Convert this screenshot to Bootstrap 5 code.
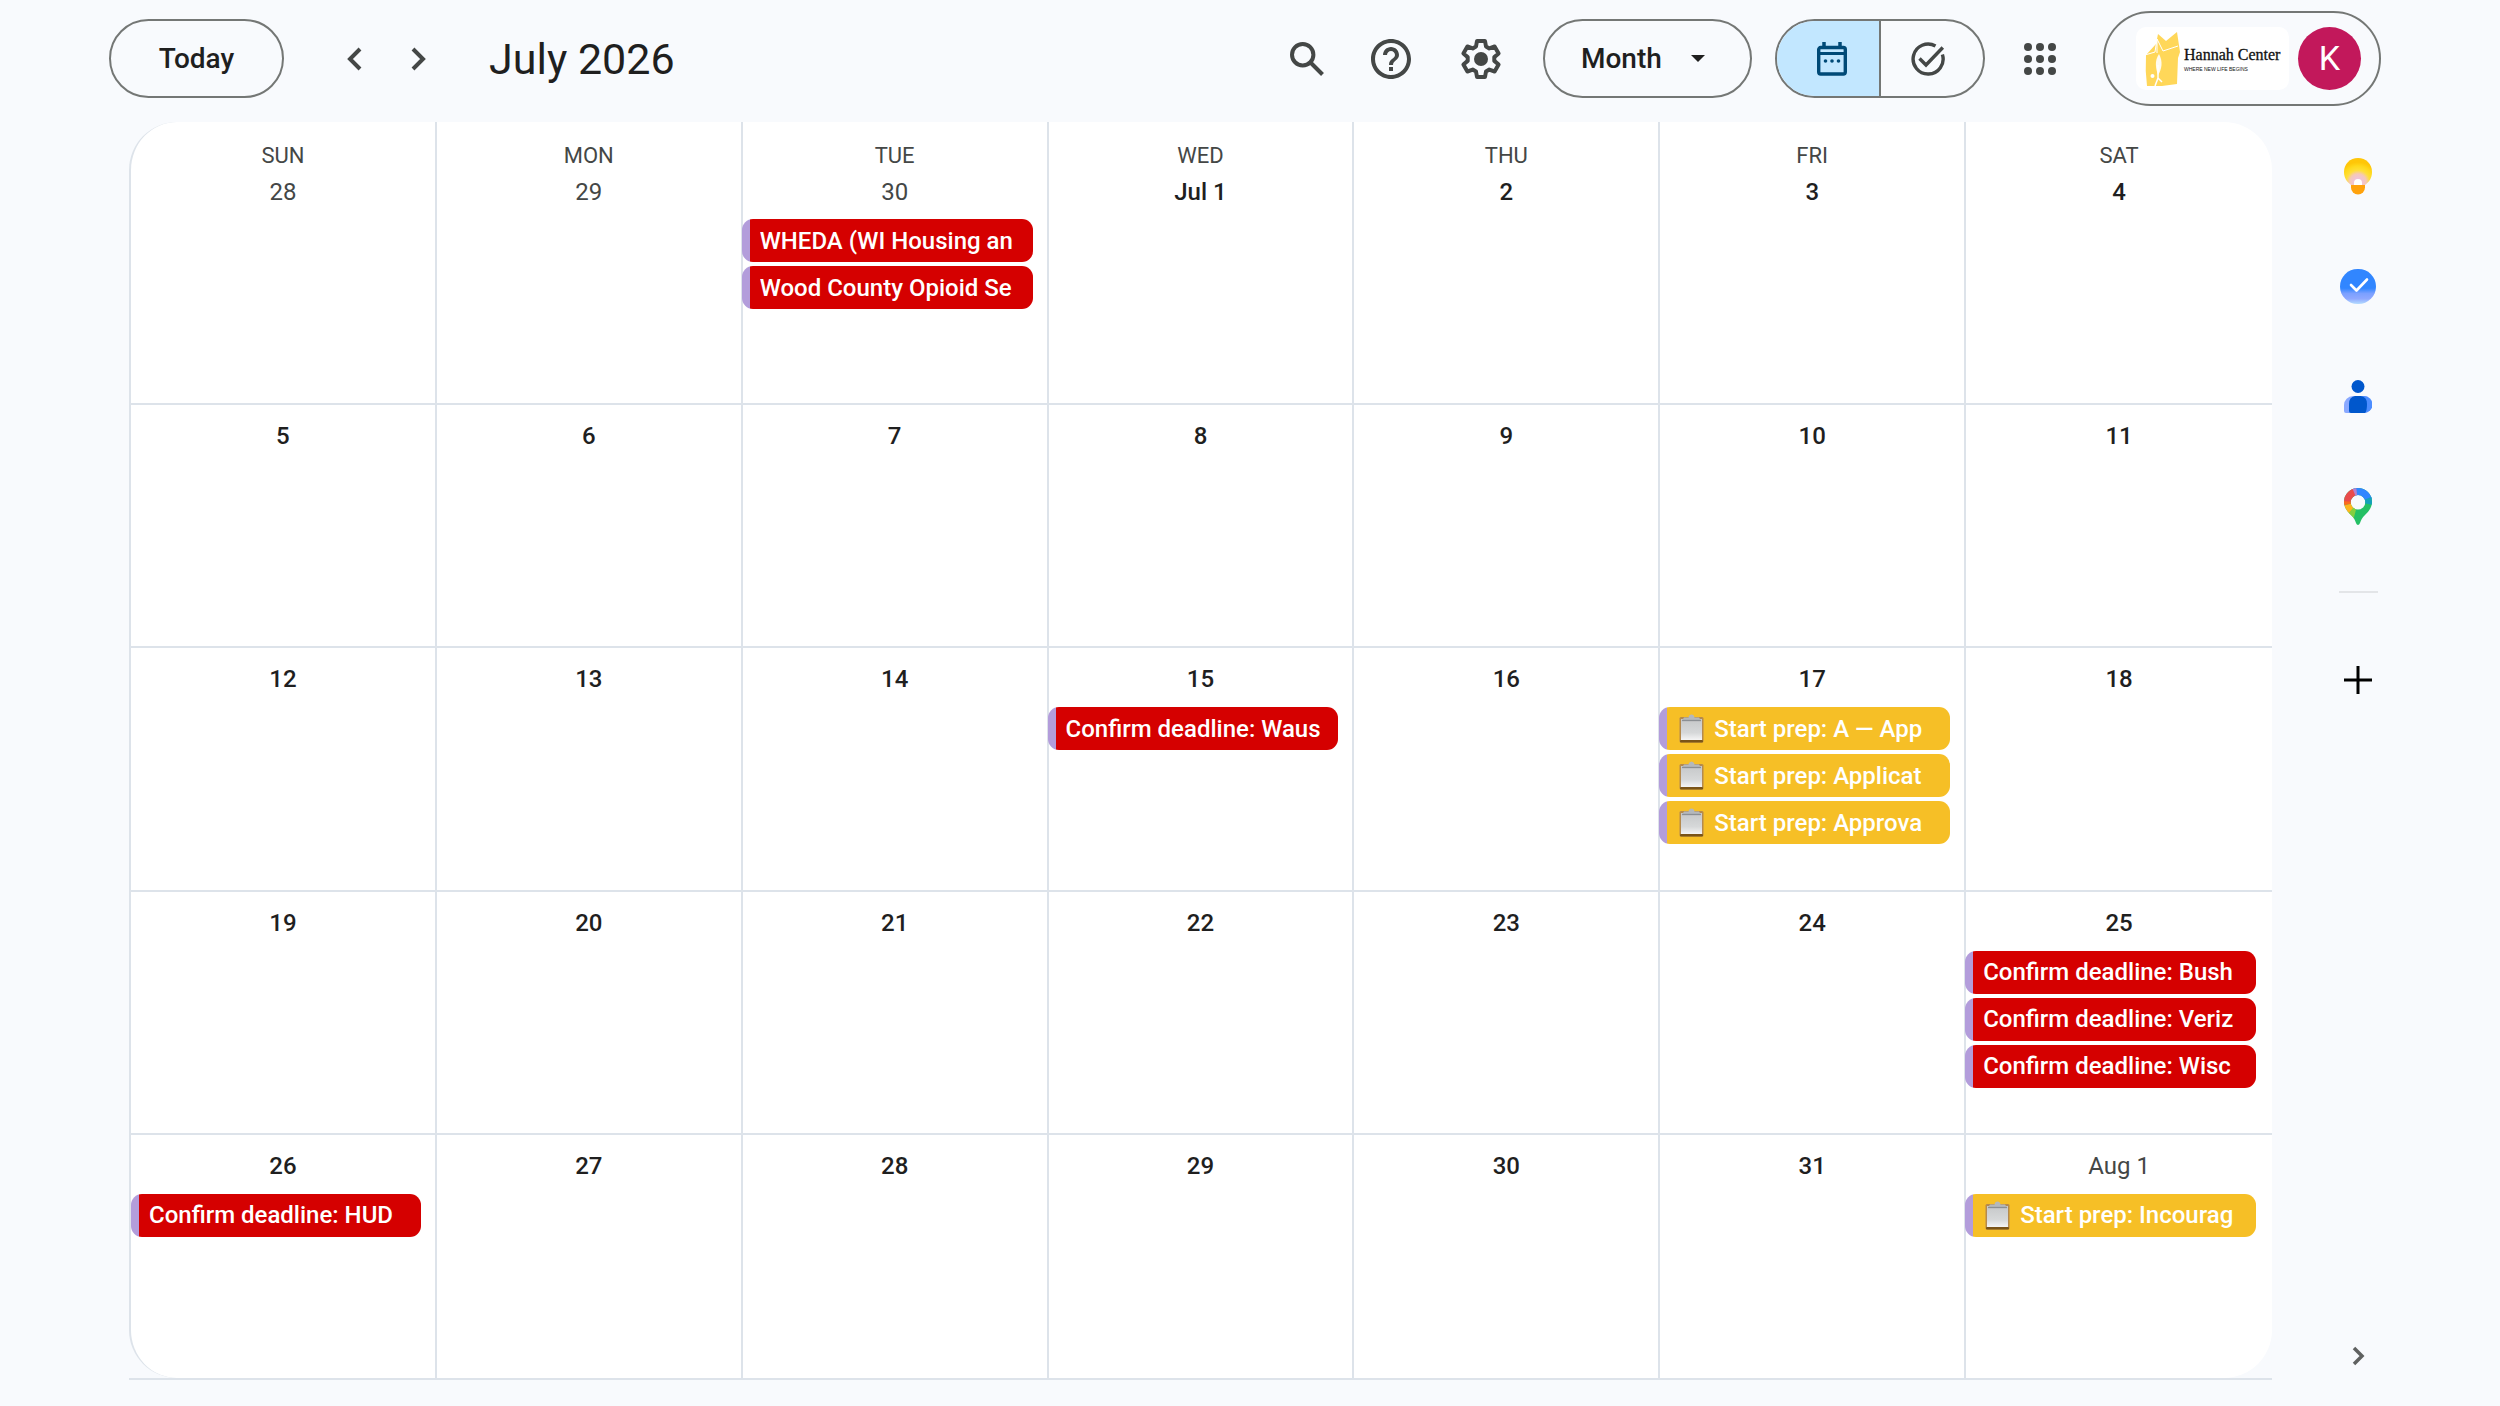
<!DOCTYPE html>
<html lang="en">
<head>
<meta charset="utf-8">
<meta name="viewport" content="width=device-width, initial-scale=1">
<title>Calendar - July 2026</title>
<link href="https://cdn.jsdelivr.net/npm/bootstrap@5.3.0/dist/css/bootstrap.min.css" rel="stylesheet">
<style>
  :root { --line: #dde3ea; --ink: #1f1f1f; --muted: #444746; --outline: #747775; }
  body { background: #f8fafd; color: var(--ink); font-family: Roboto, "Liberation Sans", sans-serif; font-weight: 500; }
  button { color: var(--muted); }
  svg { display: block; flex: none; }

  .topbar { height: 117px; padding: 0 119px 0 109px; margin-bottom: 5px; }
  .pill { height: 79px; border: 2px solid var(--outline); border-radius: 40px; background: transparent; color: var(--ink); font-size: 28px; font-weight: 500; }
  .pill-today { width: 175px; margin-right: 38px; }
  .tool { width: 64px; height: 64px; padding: 0; border: 0; background: transparent; display: flex; align-items: center; justify-content: center; }
  .month-title { font-size: 43px; font-weight: 400; line-height: 56px; margin: 0 0 0 39px; }
  .tool-group { gap: 22px; margin-right: 30px; }
  .tool-group .tool:first-child svg { margin-left: 4px; }

  .view-picker { margin-right: 23px; }
  .view-picker > * { grid-area: 1 / 1; }
  .view-picker select { width: 209px; padding: 0 36px; appearance: none; }
  .view-picker svg { justify-self: end; align-self: center; margin-right: 47px; pointer-events: none; }

  .mode { width: 210px; padding: 0; overflow: hidden; margin-right: 23px; }
  .mode button { flex: 1; border: 0; padding: 0 8px 0 0; background: transparent; display: flex; align-items: center; justify-content: center; }
  .mode button.is-on { padding: 0 0 0 8px; background: #c2e7ff; color: #004a77; border-right: 2px solid var(--outline); }

  .account { height: 95px; width: 278px; padding: 0 18px 0 31px; border-radius: 48px; margin-left: 31px; }
  .org { width: 153px; height: 63px; border-radius: 10px; background: #fff; padding-left: 9px; gap: 4px; color: #111; }
  .org-name { font: 400 16px/20px "Liberation Serif", serif; white-space: nowrap; -webkit-text-stroke: 0.3px currentColor; }
  .org-tag { font: 400 5px/8px "Liberation Sans Narrow", "Liberation Sans", sans-serif; white-space: nowrap; text-align: left; }
  .avatar { width: 63px; height: 63px; border-radius: 50%; background: #c2185b; color: #fff; font-size: 34px; font-weight: 400; }

  .stage { flex: 1; padding-bottom: 26px; }
  .board { flex: 1; margin-left: 129px; border-bottom: 2px solid var(--line); min-width: 0; }
  .board-inner { flex: 1; background: #fff; border-left: 2px solid var(--line); border-radius: 48px; overflow: hidden; }
  .cal { flex: 1; display: grid; grid-template-columns: repeat(7, minmax(0, 1fr)); grid-template-rows: 45px 239fr repeat(4, 244fr); }
  .cal thead, .cal tbody, .cal tr { display: contents; }
  .cal th { padding: 23px 0 0; font-size: 22px; line-height: 22px; font-weight: 400; color: var(--muted); text-align: center; }
  .cal td { padding: 17px 0 0; border-bottom: 2px solid var(--line); min-width: 0; }
  .cal th:not(:last-child), .cal td:not(:last-child) { border-right: 2px solid var(--line); }
  .cal tbody tr:first-child td { padding-top: 11px; }
  .cal tbody tr:last-child td { border-bottom: 0; }
  .day { font-size: 24px; line-height: 28px; text-align: center; margin-bottom: 14px; }
  .cal tbody tr:first-child .day { margin-bottom: 13px; }
  .day.other { color: var(--muted); font-weight: 400; }

  .ev { display: flex; align-items: center; height: 43px; margin: 0 14px 4px -1px; padding: 0 15px 0 18px; border-radius: 11px; background: linear-gradient(90deg, #b39ddb 8px, #d50000 8px); color: #fff; font-size: 24px; line-height: 32px; text-decoration: none; }
  .ev:hover { color: #fff; }
  .ev-text { overflow: hidden; white-space: nowrap; }
  .ev.prep { background: linear-gradient(90deg, #b39ddb 8px, #f6bf26 8px); padding-left: 20px; }
  .ev.prep svg { margin-right: 10px; }
  td:first-child .ev { margin-left: 0; }
  td:last-child .ev { margin-right: 16px; }

  .rail { width: 228px; }
  .rail-col { width: 110px; margin: -1px 0 0 31px; }
  .rail-col .tool { width: 110px; height: 110px; }
  .rail-col hr { width: 39px; margin: 30px 0 0; border-top: 2px solid #e3e5e8; opacity: 1; }
  .rail-col .add { height: 174px; }
  .rail-col .fold { height: 48px; color: #5f6160; }
</style>
<script src="https://cdn.jsdelivr.net/npm/bootstrap@5.3.0/dist/js/bootstrap.bundle.min.js"></script>
</head>
<body>
<svg width="0" height="0" class="position-absolute" aria-hidden="true">
  <defs>
    <linearGradient id="paper" x1="0" y1="0" x2="0" y2="1"><stop offset="0" stop-color="#c6c8c9"/><stop offset=".65" stop-color="#d6d8d9"/><stop offset="1" stop-color="#f5f5f5"/></linearGradient>
    <linearGradient id="taskfill" x1="0" y1="0" x2="0" y2="1"><stop offset=".55" stop-color="#3186ff"/><stop offset=".7" stop-color="#7ba0ff"/><stop offset=".85" stop-color="#8fa8ff"/><stop offset="1" stop-color="#b4dcff"/></linearGradient>
    <radialGradient id="bulb" cx=".5" cy=".88" r=".85"><stop offset=".12" stop-color="#f0c3dc"/><stop offset=".34" stop-color="#f5c8b8"/><stop offset=".5" stop-color="#ffdf3a"/><stop offset=".68" stop-color="#ffd91c"/><stop offset=".85" stop-color="#ffc608"/></radialGradient>
    <symbol id="clip" viewBox="0 0 25 29">
      <rect x=".5" y="3" width="24" height="25.5" rx="1.5" fill="#b58a4c"/>
      <rect x="1" y="26" width="23" height="2.5" rx="1" fill="#7a5418"/>
      <rect x="2" y="5" width="21" height="21" fill="url(#paper)"/>
      <path d="M3 6.500 5 3.500h4.500Q10 .5 12.500.5T15.500 3.500H20l2 3z" fill="#b4b8bb"/>
      <path d="M3 6.500h19" stroke="#8b8f93" stroke-width="1.300"/>
    </symbol>
  </defs>
</svg>

<div class="d-flex flex-column min-vh-100">
  <header class="topbar d-flex align-items-center">
    <button class="pill pill-today" type="button">Today</button>
    <button class="tool" type="button" aria-label="Previous month"><svg width="16" height="24" viewBox="0 0 16 24" fill="none" stroke="currentColor" stroke-width="4"><path d="M14 2 4 12l10 10"/></svg></button>
    <button class="tool" type="button" aria-label="Next month"><svg width="16" height="24" viewBox="0 0 16 24" fill="none" stroke="currentColor" stroke-width="4"><path d="m3 2 10 10L3 22"/></svg></button>
    <h1 class="month-title">July 2026</h1>

    <div class="tool-group d-flex ms-auto">
      <button class="tool" type="button" aria-label="Search"><svg width="34" height="34" viewBox="0 0 34 34" fill="none" stroke="currentColor" stroke-width="4"><circle cx="12.700" cy="12.700" r="10.700"/><path d="m20.500 20.500 12 12"/></svg></button>
      <button class="tool" type="button" aria-label="Support"><svg width="48" height="48" viewBox="0 0 24 24" fill="currentColor"><path d="M11 18h2v-2h-2v2zm1-16C6.480 2 2 6.480 2 12s4.480 10 10 10 10-4.480 10-10S17.520 2 12 2zm0 18c-4.410 0-8-3.590-8-8s3.590-8 8-8 8 3.590 8 8-3.590 8-8 8zm0-14c-2.210 0-4 1.790-4 4h2c0-1.100.9-2 2-2s2 .9 2 2c0 2-3 1.750-3 5h2c0-2.250 3-2.500 3-5 0-2.210-1.790-4-4-4z"/></svg></button>
      <button class="tool ms-1" type="button" aria-label="Settings"><svg width="48" height="48" viewBox="-24 -24 48 48" fill="none" stroke="currentColor" stroke-width="4" stroke-linejoin="round"><path d="M-5-12.500-4-18H4L5-12.500 8.300-10.600 13.600-12.500 17.600-5.500 13.300-1.900V1.900L17.600 5.500 13.600 12.500 8.300 10.600 5 12.500 4 18H-4L-5 12.500-8.300 10.600-13.600 12.500-17.600 5.500-13.300 1.900V-1.900L-17.600-5.500-13.600-12.500-8.300-10.600z"/><circle r="7" fill="currentColor" stroke="none"/></svg></button>
    </div>

    <div class="view-picker d-grid">
      <select class="pill" aria-label="View"><option>Month</option><option>Week</option><option>Day</option></select>
      <svg width="14" height="7" viewBox="0 0 14 7"><path d="M0 0h14L7 7z" fill="#1f1f1f"/></svg>
    </div>

    <div class="pill mode d-flex" role="group" aria-label="Calendar or tasks">
      <button class="is-on" type="button" aria-label="Calendar"><svg width="30" height="34" viewBox="0 0 30 34"><path d="M7 0v6M23 0v6" stroke="currentColor" stroke-width="3.500"/><rect x="1.700" y="5.500" width="26.600" height="26.500" rx="2" fill="none" stroke="currentColor" stroke-width="3.400"/><path d="M1 11.500h28" stroke="currentColor" stroke-width="3"/><g fill="currentColor"><circle cx="8.500" cy="19" r="1.800"/><circle cx="15" cy="19" r="1.800"/><circle cx="21.500" cy="19" r="1.800"/></g></svg></button>
      <button type="button" aria-label="Tasks"><svg width="34" height="34" viewBox="0 0 34 34" fill="none" stroke="currentColor" stroke-width="3.400"><path d="M24.500 4A15 15 0 1 0 31.400 12.500"/><path d="m8.500 16.500 6.500 6.500L31.800 5.500"/></svg></button>
    </div>

    <button class="tool" type="button" aria-label="Apps"><svg width="32" height="32" viewBox="0 0 32 32" fill="currentColor"><circle cx="4" cy="4" r="4"/><circle cx="16" cy="4" r="4"/><circle cx="28" cy="4" r="4"/><circle cx="4" cy="16" r="4"/><circle cx="16" cy="16" r="4"/><circle cx="28" cy="16" r="4"/><circle cx="4" cy="28" r="4"/><circle cx="16" cy="28" r="4"/><circle cx="28" cy="28" r="4"/></svg></button>

    <button class="pill account d-flex align-items-center justify-content-between" type="button" aria-label="Account">
      <span class="org d-flex align-items-center">
        <svg width="35" height="56" viewBox="0 0 35 56"><path d="M1 24 11 13 13 3l8 7L32 1l3 20-2 6-1 26-15 2H2Q0 40 1 24z" fill="#ffd759"/><path d="M0 24l10-3 2-13 6 12 15-5M12 8l0 14" fill="none" stroke="#fff" stroke-width="1"/><path d="M14 23c-5 7-3 15-1 21 4-6 5-14 1-21z" fill="#fff" opacity=".9"/><path d="M13 34v13l-3 8M13 47l4 4" fill="none" stroke="#fff" stroke-width="1.500"/><circle cx="7.500" cy="45" r="2" fill="#fff"/></svg>
        <span class="d-flex flex-column align-items-start"><span class="org-name">Hannah Center</span><span class="org-tag">WHERE NEW LIFE BEGINS</span></span>
      </span>
      <span class="avatar d-flex align-items-center justify-content-center">K</span>
    </button>
  </header>

  <div class="stage d-flex">
    <main class="board d-flex">
      <div class="board-inner d-flex">
        <table class="cal">
          <thead><tr><th scope="col">SUN</th><th scope="col">MON</th><th scope="col">TUE</th><th scope="col">WED</th><th scope="col">THU</th><th scope="col">FRI</th><th scope="col">SAT</th></tr></thead>
          <tbody>
            <tr>
              <td><div class="day other">28</div></td>
              <td><div class="day other">29</div></td>
              <td><div class="day other">30</div>
                <a class="ev" href="#"><span class="ev-text">WHEDA (WI Housing an</span></a>
                <a class="ev" href="#"><span class="ev-text">Wood County Opioid Se</span></a></td>
              <td><div class="day">Jul 1</div></td>
              <td><div class="day">2</div></td>
              <td><div class="day">3</div></td>
              <td><div class="day">4</div></td>
            </tr>
            <tr>
              <td><div class="day">5</div></td><td><div class="day">6</div></td><td><div class="day">7</div></td><td><div class="day">8</div></td><td><div class="day">9</div></td><td><div class="day">10</div></td><td><div class="day">11</div></td>
            </tr>
            <tr>
              <td><div class="day">12</div></td><td><div class="day">13</div></td><td><div class="day">14</div></td>
              <td><div class="day">15</div>
                <a class="ev" href="#"><span class="ev-text">Confirm deadline: Waus</span></a></td>
              <td><div class="day">16</div></td>
              <td><div class="day">17</div>
                <a class="ev prep" href="#"><svg width="25" height="29"><use href="#clip"/></svg><span class="ev-text">Start prep: A — App</span></a>
                <a class="ev prep" href="#"><svg width="25" height="29"><use href="#clip"/></svg><span class="ev-text">Start prep: Applicat</span></a>
                <a class="ev prep" href="#"><svg width="25" height="29"><use href="#clip"/></svg><span class="ev-text">Start prep: Approva</span></a></td>
              <td><div class="day">18</div></td>
            </tr>
            <tr>
              <td><div class="day">19</div></td><td><div class="day">20</div></td><td><div class="day">21</div></td><td><div class="day">22</div></td><td><div class="day">23</div></td><td><div class="day">24</div></td>
              <td><div class="day">25</div>
                <a class="ev" href="#"><span class="ev-text">Confirm deadline: Bush</span></a>
                <a class="ev" href="#"><span class="ev-text">Confirm deadline: Veriz</span></a>
                <a class="ev" href="#"><span class="ev-text">Confirm deadline: Wisc</span></a></td>
            </tr>
            <tr>
              <td><div class="day">26</div>
                <a class="ev" href="#"><span class="ev-text">Confirm deadline: HUD</span></a></td>
              <td><div class="day">27</div></td><td><div class="day">28</div></td><td><div class="day">29</div></td><td><div class="day">30</div></td><td><div class="day">31</div></td>
              <td><div class="day other">Aug 1</div>
                <a class="ev prep" href="#"><svg width="25" height="29"><use href="#clip"/></svg><span class="ev-text">Start prep: Incourag</span></a></td>
            </tr>
          </tbody>
        </table>
      </div>
    </main>

    <aside class="rail d-flex">
      <div class="rail-col d-flex flex-column align-items-center">
        <button class="tool" type="button" aria-label="Keep"><svg width="28" height="37" viewBox="0 0 28 37"><path d="M14 0C22 0 28 6 28 14c0 6-3 10-7 13H7C3 24 0 20 0 14 0 6 6 0 14 0z" fill="url(#bulb)"/><path d="M7 27h14v2.500a7 7 0 0 1-14 0z" fill="#ffa20c"/><path d="M10 27v-2a4 4 0 0 1 8 0v2z" fill="#fff"/></svg></button>
        <button class="tool" type="button" aria-label="Tasks panel"><svg width="36" height="35" viewBox="0 0 36 35"><rect width="36" height="35" rx="17.500" fill="url(#taskfill)"/><path d="m11 16 5.500 5.500L27 10.500" fill="none" stroke="#fff" stroke-width="2.600" stroke-linecap="round" stroke-linejoin="round"/></svg></button>
        <button class="tool" type="button" aria-label="Contacts"><svg width="28" height="33" viewBox="0 0 28 33"><path d="M9 16H19a9 9 0 0 1 9 8.500 9 8.500 0 0 1-7 8.500H2a2 2 0 0 1-2-2v-6a9 9 0 0 1 9-9z" fill="#8aa9ff"/><path d="M18 16h2a8.500 8.500 0 0 1 0 17h-3z" fill="#4d8dff"/><path d="M11 16h6q6 1 6 8t-2 9H7a2 2 0 0 1-2-2v-7q0-7 6-8z" fill="#0057cc"/><circle cx="14" cy="6.500" r="6.500" fill="#0057cc"/></svg></button>
        <button class="tool" type="button" aria-label="Maps"><svg width="28" height="37" viewBox="0 0 28 37"><defs><clipPath id="pin"><path clip-rule="evenodd" d="M14 0a14 14 0 0 1 14 14c0 6-4 10-7 13-3 3-4 5-5 8-1 2.500-3 2.500-4 0-1-3-2-5-5-8-3-3-7-7-7-13A14 14 0 0 1 14 0zm0 7a7.300 7.300 0 1 0 0 14.600A7.300 7.300 0 0 0 14 7z"/></clipPath></defs><g clip-path="url(#pin)"><path d="M0 0h28v37H0z" fill="#25c065"/><path d="M14 14 7-2h25v12z" fill="#3186ff"/><path d="M14 14 30 8v9z" fill="#14a0ba"/><path d="M14 14 5-2h7z" fill="#b580cf"/><path d="M14 14-2 14V-3h9z" fill="#e94b4b"/><path d="M14 14-2 13v5z" fill="#fc6a1e"/><path d="m14 14-16 4v14h5z" fill="#ffb51c"/><path d="M14 14 3 27l6 6z" fill="#86cf3f"/></g></svg></button>
        <hr>
        <button class="tool add" type="button" aria-label="Get add-ons"><svg width="28" height="28" viewBox="0 0 28 28"><path d="M14 0v28M0 14h28" stroke="#000" stroke-width="3"/></svg></button>
        <button class="tool fold mt-auto" type="button" aria-label="Hide side panel"><svg width="13" height="20" viewBox="0 0 13 20" fill="none" stroke="currentColor" stroke-width="3.500"><path d="m2 2 8 8-8 8"/></svg></button>
      </div>
    </aside>
  </div>
</div>
</body>
</html>
